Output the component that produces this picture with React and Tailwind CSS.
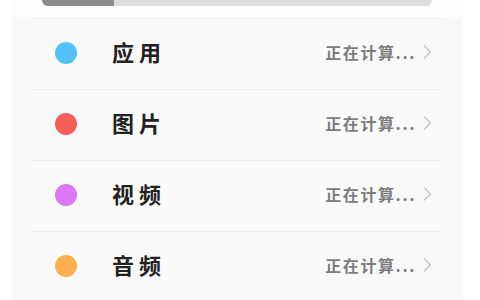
import React from 'react';

const font = { fontFamily: '"Noto Sans CJK SC", "Noto Sans", sans-serif' };

// 存储分类
const rows = [
  { name: '应用', dot: 'bg-[#52c2f6]' },
  { name: '图片', dot: 'bg-[#f55f57]' },
  { name: '视频', dot: 'bg-[#db78f4]' },
  { name: '音频', dot: 'bg-[#fdb04f]' },
];

function Chevron() {
  return (
    <svg width="9" height="14" viewBox="0 0 9 14" fill="none" className="ml-[7px]">
      <path d="M1.5 1 L7.5 7 L1.5 13" stroke="#c2c2c2" strokeWidth="1.2" strokeLinecap="round" strokeLinejoin="round" />
    </svg>
  );
}

function Row({ row }) {
  return (
    <div className="flex h-[71px] items-center border-b border-[#ececec] pb-[3px]">
      <div className={`ml-[23px] h-[22px] w-[22px] rounded-full ${row.dot}`} />
      <span className="ml-[35px] mb-[4px] text-[22px] font-bold leading-none tracking-[5px] text-[#222]">
        {row.name}
      </span>
      <div className="ml-auto mr-[10px] mb-[2px] flex items-center">
        <span className="text-[16px] font-bold leading-none tracking-[1.6px] text-[#7c7c7c]">
          正在计算...
        </span>
        <Chevron />
      </div>
    </div>
  );
}

export default function App() {
  return (
    <div className="h-[300px] w-[480px] overflow-hidden bg-white" style={font}>
      <div className="ml-[12px] h-full w-[450px] bg-[#f9f9f9]">
        {/* 顶部进度条 */}
        <div className="bg-[#fdfdfd] px-[30px] pb-[12px]">
          <div className="flex h-[6px] overflow-hidden rounded-b-[6px] bg-[#dddddd]">
            <div className="w-[72px] bg-[#8c8c8c]" />
          </div>
        </div>
        <div className="mx-[20px] border-t border-[#ececec]">
          {rows.map(row => (
            <Row key={row.name} row={row} />
          ))}
        </div>
      </div>
    </div>
  );
}
